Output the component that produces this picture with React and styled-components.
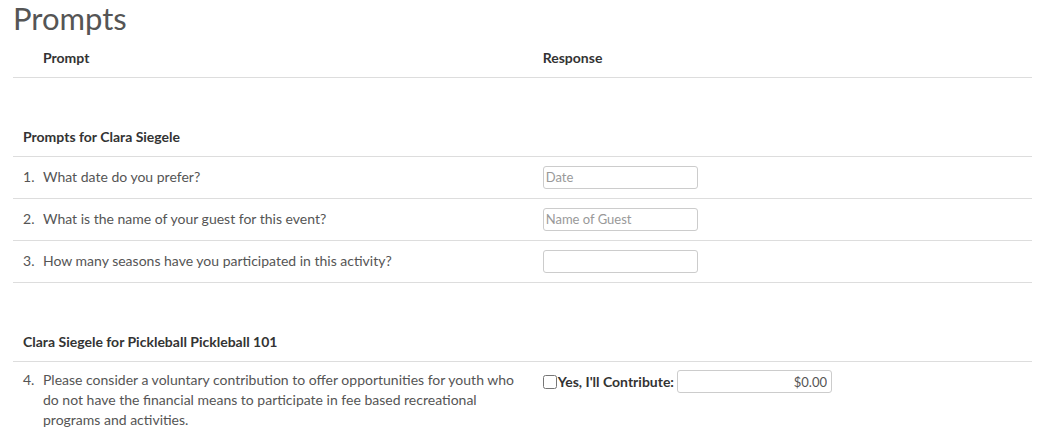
import React from "react"
import styled, { createGlobalStyle } from "styled-components"

const Global = createGlobalStyle`
	body {
		margin: 0;
		background: #fff;
		font-family: Lato, "Liberation Sans", sans-serif;
		font-size: 14px;
		line-height: 20px;
		color: #555;
	}
`

const Page = styled.div`
	padding: 0 24px 0 13px;
`

const Title = styled.h1`
	margin: 0;
	font-size: 31px;
	font-weight: 400;
	line-height: 36px;
	color: #555;
`

const Table = styled.table`
	width: 100%;
	border-collapse: collapse;
	margin-top: 5px;
`

const HeadCell = styled.th`
	text-align: left;
	font-weight: 700;
	color: #333;
	padding: 7px 10px 9px ${p => (p.$indent ? "30px" : "10px")};
	border-bottom: 1px solid #ddd;
	width: ${p => p.$width || "auto"};
`

const Spacer = styled.tr`
	height: ${p => p.$h || 37}px;
`

const SectionCell = styled.td`
	font-weight: 700;
	color: #333;
	padding: 12px 10px 9px;
	border-bottom: 1px solid #ddd;
`

const Cell = styled.td`
	padding: ${p => (p.$top ? "8px 10px" : "9px 10px")};
	vertical-align: ${p => (p.$top ? "top" : "middle")};
	border-bottom: ${p => (p.$last ? "none" : "1px solid #ddd")};
`

const Question = styled.div`
	display: flex;
`

const Num = styled.span`
	width: 20px;
	flex: none;
`

const TextInput = styled.input`
	display: block;
	box-sizing: border-box;
	width: 155px;
	height: 23px;
	padding: 2px 4px 2px 2px;
	border: 1px solid #ccc;
	border-radius: 3px;
	font-family: Lato, "Liberation Sans", sans-serif;
	font-size: 13px;
	color: #555;
	text-align: ${p => (p.$right ? "right" : "left")};
	&::placeholder {
		color: #999;
	}
`

const Contribute = styled.label`
	display: flex;
	align-items: center;
	font-weight: 700;
	color: #333;
`

const Check = styled.input`
	margin: 0 1px 0 0;
	width: 14px;
	height: 14px;
`

const AmountInput = styled(TextInput)`
	margin-left: 3px;
`

const questions = [
	{ n: 1, text: "What date do you prefer?", placeholder: "Date" },
	{ n: 2, text: "What is the name of your guest for this event?", placeholder: "Name of Guest" },
	{ n: 3, text: "How many seasons have you participated in this activity?", placeholder: "" }
]

export default function App() {
	return (
		<Page>
			<Global />
			<Title>Prompts</Title>
			<Table>
				<thead>
					<tr>
						<HeadCell $indent $width="51%">Prompt</HeadCell>
						<HeadCell>Response</HeadCell>
					</tr>
				</thead>
				<tbody>
					<Spacer />
					<tr>
						<SectionCell colSpan={2}>Prompts for Clara Siegele</SectionCell>
					</tr>
					{questions.map(q => (
						<tr key={q.n}>
							<Cell>
								<Question>
									<Num>{q.n}.</Num>
									<span>{q.text}</span>
								</Question>
							</Cell>
							<Cell>
								<TextInput placeholder={q.placeholder} />
							</Cell>
						</tr>
					))}
					<Spacer $h={38} />
					<tr>
						<SectionCell colSpan={2}>Clara Siegele for Pickleball Pickleball 101</SectionCell>
					</tr>
					<tr>
						<Cell $top $last>
							<Question>
								<Num>4.</Num>
								<span>
									Please consider a voluntary contribution to offer opportunities for youth who
									do not have the financial means to participate in fee based recreational
									programs and activities.
								</span>
							</Question>
						</Cell>
						<Cell $top $last>
							<Contribute>
								<Check type="checkbox" />
								Yes, I'll Contribute:
								<AmountInput $right defaultValue="$0.00" />
							</Contribute>
						</Cell>
					</tr>
				</tbody>
			</Table>
		</Page>
	)
}
